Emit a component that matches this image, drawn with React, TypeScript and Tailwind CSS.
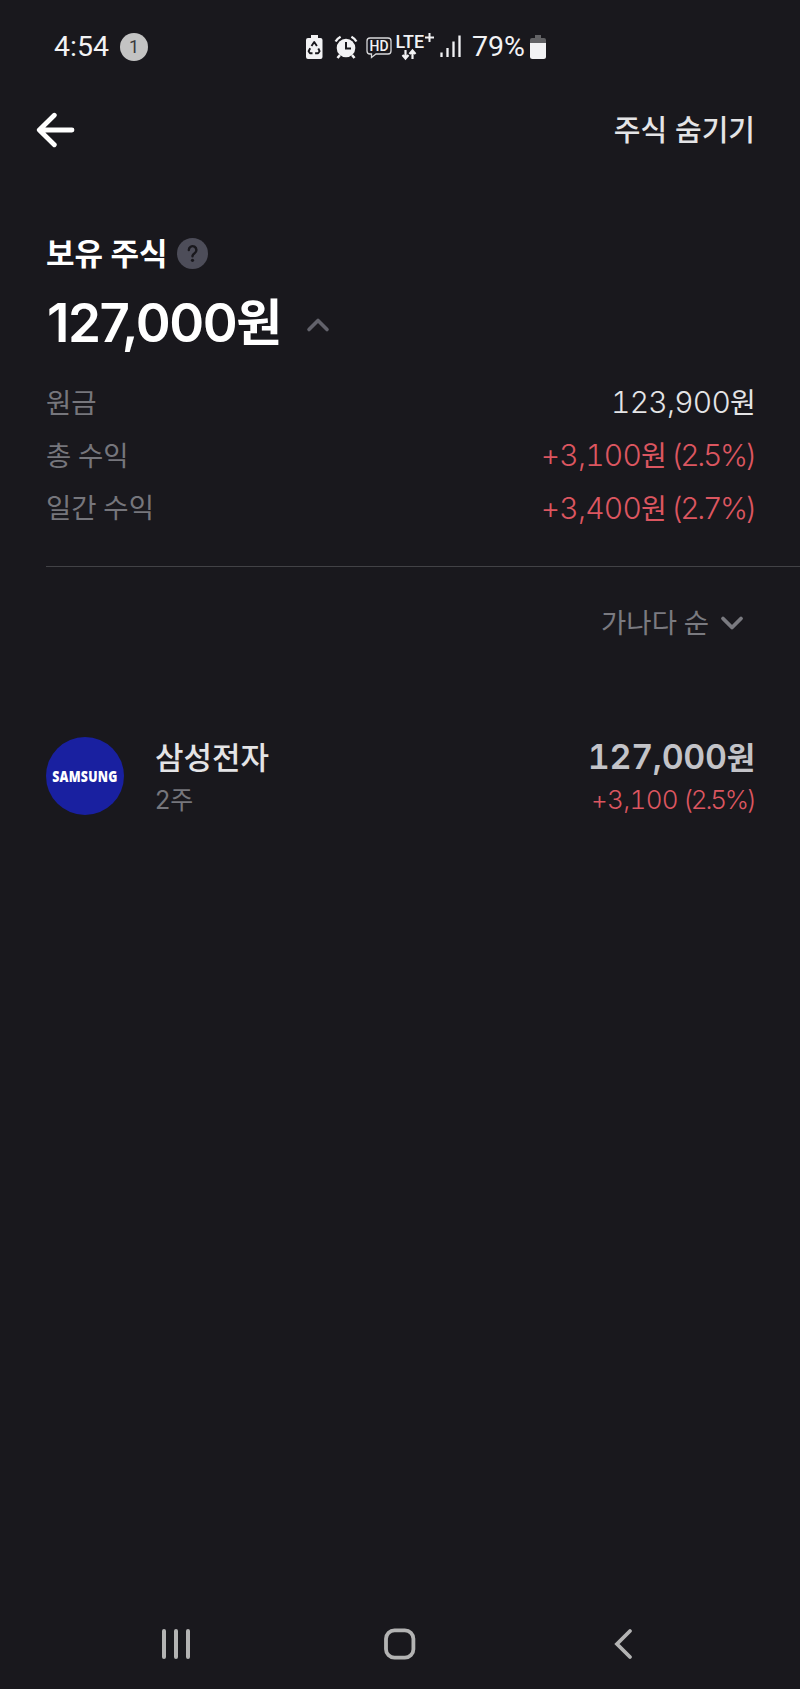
import React, { ReactNode } from 'react'

interface SummaryRow {
  label: string
  amount: string
  rate?: string
  up?: boolean
}

interface Holding {
  name: string
  shares: string
  value: string
  profit: string
  rate: string
}

const summaryRows: SummaryRow[] = [
  { label: '원금', amount: '123,900' },
  { label: '총 수익', amount: '+3,100', rate: '(2.5%)', up: true },
  { label: '일간 수익', amount: '+3,400', rate: '(2.7%)', up: true }
]

const holdings: Holding[] = [
  { name: '삼성전자', shares: '2주', value: '127,000', profit: '+3,100', rate: '(2.5%)' }
]

const StatusBar = () => (
  <div className="flex h-[94px] items-center pl-[54px] font-[Roboto,sans-serif] text-[#f2f2f4]">
    <span className="w-[66px] text-[28.5px] leading-none">4:54</span>
    <span className="flex h-7 w-7 items-center justify-center rounded-full bg-[#c3c3c3] text-[18px] leading-none text-[#39393b]">
      1
    </span>
    {/* battery saver, alarm, HD voice, network and signal */}
    <svg className="ml-[156px] h-[30px] w-[160px] shrink-0" viewBox="304 32 160 30" fill="none">
      <path
        d="M311 35h7v3h2.5a2 2 0 0 1 2 2v17a2 2 0 0 1-2 2h-12.500a2 2 0 0 1-2-2V40a2 2 0 0 1 2-2h3z"
        fill="#f2f2f4"
      />
      <path d="M311.500 46l2.700-4 2.700 4M318.300 48.500l1.300 2.700-1.500 2h-3M312.500 53.200h-2.500l-1.400-2 1.600-3" stroke="#19181d" strokeWidth="1.900" strokeLinejoin="round" />
      <circle cx="346" cy="48" r="9.300" fill="#f2f2f4" />
      <path d="M340 55l-2.500 3M352 55l2.500 3" stroke="#f2f2f4" strokeWidth="2.600" />
      <path d="M335.600 41.500a13 13 0 0 1 5-4.800M351.400 36.700a13 13 0 0 1 5 4.800" stroke="#f2f2f4" strokeWidth="2.400" />
      <path d="M346 42v6.500h5" stroke="#19181d" strokeWidth="2" />
      <path
        d="M370 38h18a3 3 0 0 1 3 3v10a3 3 0 0 1-3 3h-12l-4.500 3.500V54H370a3 3 0 0 1-3-3V41a3 3 0 0 1 3-3z"
        stroke="#d8d8da"
        strokeWidth="1.300"
      />
      <text x="369.500" y="51.300" fontSize="15" fontWeight="500" textLength="19" lengthAdjust="spacingAndGlyphs" fill="#f2f2f4">
        HD
      </text>
      <text x="395.500" y="48" fontSize="17.500" fontWeight="500" textLength="28.500" lengthAdjust="spacingAndGlyphs" fill="#f2f2f4">
        LTE
      </text>
      <path d="M429.500 33v9M425 37.500h9" stroke="#f2f2f4" strokeWidth="2" />
      <path d="M405.500 50v8M402.500 55l3 3.500 3-3.500M412.500 59v-8M409.500 54l3-3.500 3 3.500" stroke="#f2f2f4" strokeWidth="2.200" />
      <path d="M441.500 52.500V57M447.500 48v9M453.500 41.500V57M459.500 35.500V57" stroke="#f2f2f4" strokeWidth="2.300" />
    </svg>
    <span className="ml-[8px] w-[57.500px] text-[28.500px] leading-none">79%</span>
    <svg className="h-[24px] w-[16px] shrink-0" viewBox="0 0 16 24">
      <path d="M5 0h6v3h3a2 2 0 0 1 2 2v4H0V5a2 2 0 0 1 2-2h3z" fill="#626265" />
      <path d="M0 8h16v13.500a2.500 2.500 0 0 1-2.500 2.500h-11A2.500 2.500 0 0 1 0 21.500z" fill="#f2f2f4" />
    </svg>
  </div>
)

const Header = () => (
  <header className="flex h-[72px] items-center justify-between pr-[45px] pl-[36px]">
    <svg className="h-[36px] w-[40px]" viewBox="0 0 40 36" fill="none" stroke="#fff" strokeWidth="4.800" strokeLinecap="round" strokeLinejoin="round">
      <path d="M18.300 3.200L3.300 18l15 14.800M4 18h32" />
    </svg>
    <button className="text-[29px] leading-none font-medium text-[#e4e4e6]">주식 숨기기</button>
  </header>
)

const Amount = ({ children, unit }: { children: ReactNode; unit: string }) => (
  <>
    {children}
    <span className={unit}>원</span>
  </>
)

const Summary = () => (
  <section className="pl-[46px]">
    <div className="mt-[67px] flex h-[40px] items-center">
      <h1 className="w-[131px] pt-px text-[31px] leading-none font-bold whitespace-nowrap text-white">보유 주식</h1>
      <svg className="h-[31px] w-[31px]" viewBox="0 0 31 31" fill="none">
        <circle cx="15.500" cy="15.500" r="15.500" fill="#4d4d59" />
        <path d="M11.800 12a3.800 3.800 0 1 1 5.800 3.200c-1.400.9-2.100 1.500-2.100 3" stroke="#19181d" strokeWidth="2.400" strokeLinecap="round" />
        <circle cx="15.500" cy="22.300" r="1.600" fill="#19181d" />
      </svg>
    </div>

    <div className="mt-[20px] flex h-[60px] items-center">
      <p className="w-[260px] pl-px text-[53px] leading-none font-semibold tracking-[-1.500px] whitespace-nowrap text-white">
        <Amount unit="relative top-[-1px] text-[50px] font-bold">127,000</Amount>
      </p>
      <svg className="mt-[4px] h-[16px] w-[24px]" viewBox="0 0 24 16" fill="none" stroke="#62626b" strokeWidth="3.600" strokeLinecap="round" strokeLinejoin="round">
        <path d="M3 12.500l9-9 9 9" />
      </svg>
    </div>

    <dl className="mt-[23px] pr-[45px]">
      {summaryRows.map((row) => (
        <div key={row.label} className="flex h-[52.700px] items-center justify-between">
          <dt className="pt-[3px] text-[27.500px] leading-none text-[#76767c] [word-spacing:-1px]">{row.label}</dt>
          <dd
            className={
              row.up
                ? 'flex items-baseline text-[30px] leading-none font-[350] tracking-[-0.800px] text-[#dc5660] tabular-nums'
                : 'flex items-baseline text-[30px] leading-none font-[350] tracking-[-0.800px] text-[#e4e4e6] tabular-nums'
            }
          >
            <Amount unit="text-[28px] font-normal">{row.amount}</Amount>
            {row.rate && <span className="ml-[5px] tracking-[-2.400px]">{row.rate}</span>}
          </dd>
        </div>
      ))}
    </dl>
    <hr className="mt-[32px] border-t border-[#424246]" />
  </section>
)

const SortButton = () => (
  <div className="mt-[36px] flex h-[40px] items-center justify-end pr-[56px] text-[#7a7a80]">
    <span className="pt-[2px] text-[27.500px] leading-none [word-spacing:-1px]">가나다 순</span>
    <svg className="ml-[11px] h-[16px] w-[24px]" viewBox="0 0 24 16" fill="none" stroke="currentColor" strokeWidth="3.800" strokeLinecap="round" strokeLinejoin="round">
      <path d="M3 3.500l9 9 9-9" />
    </svg>
  </div>
)

const HoldingItem = ({ name, shares, value, profit, rate }: Holding) => (
  <li className="flex h-[78px] items-center pr-[45px] pl-[46px]">
    <div className="flex h-[78px] w-[78px] shrink-0 items-center justify-center rounded-full bg-[#1920a0]">
      <span className="scale-x-[0.82] font-['Open_Sans',sans-serif] text-[15px] leading-[20px] font-extrabold tracking-[0.300px] text-white">
        SAMSUNG
      </span>
    </div>
    <div className="ml-[31px] flex flex-1 flex-col pt-[4px]">
      <span className="flex h-[42px] items-center text-[31px] leading-none font-medium text-[#e4e4e6]">{name}</span>
      <span className="flex h-[42px] items-center pt-[2px] text-[25px] leading-none text-[#76767c]">{shares}</span>
    </div>
    <div className="flex flex-col items-end pt-[4px]">
      <span className="flex h-[42px] items-baseline text-[34px] leading-[42px] font-semibold tracking-[-0.300px] text-[#c3c3c8] tabular-nums">
        <Amount unit="text-[31px] font-bold">{value}</Amount>
      </span>
      <span className="flex h-[42px] items-center pt-[2px] text-[26px] leading-none font-[350] tracking-[-0.700px] text-[#dc5660] tabular-nums">
        {profit}
        <span className="ml-[5px] tracking-[-2.200px]">{rate}</span>
      </span>
    </div>
  </li>
)

const NavBar = () => (
  <nav className="mt-auto flex h-[90px] items-center pl-[160px]">
    <svg className="h-[32px] w-[32px]" viewBox="0 0 32 32" stroke="#b3b3b3" strokeWidth="4" strokeLinecap="round">
      <path d="M4 3v26M16 3v26M28 3v26" />
    </svg>
    <svg className="ml-[192px] h-[32px] w-[32px]" viewBox="0 0 32 32" fill="none" stroke="#b3b3b3" strokeWidth="3.800">
      <rect x="2" y="2.300" width="27.400" height="27.400" rx="8.500" />
    </svg>
    <svg className="ml-[197px] h-[32px] w-[20px]" viewBox="0 0 20 32" fill="none" stroke="#b3b3b3" strokeWidth="3.800" strokeLinecap="round">
      <path d="M17 3L4 16l13 13" />
    </svg>
  </nav>
)

export default function App() {
  return (
    <div className="flex h-[1689px] w-[800px] flex-col overflow-hidden bg-[#19181d] font-[Inter,'Noto_Sans_CJK_KR',sans-serif]">
      <StatusBar />
      <Header />
      <Summary />
      <SortButton />
      <ul className="mt-[94px]">
        {holdings.map((item) => (
          <HoldingItem key={item.name} {...item} />
        ))}
      </ul>
      <NavBar />
    </div>
  )
}
